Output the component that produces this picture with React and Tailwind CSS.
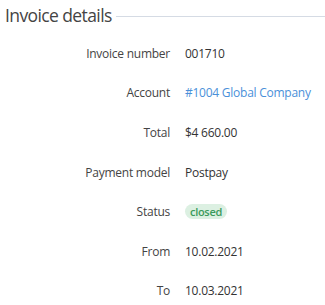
export default function App() {
  const rows = [
    ["Invoice number", <span>001710</span>],
    ["Account", <span className="text-[#4a90d9]">#1004 Global Company</span>],
    ["Total", <span>$4 660.00</span>],
    ["Payment model", <span>Postpay</span>],
    [
      "Status",
      <span className="inline-flex items-center h-[15px] px-[5px] rounded-full bg-[#dcf0e2] text-[#3b9a5c] text-[11px] font-semibold leading-none tracking-[-0.3px]">
        closed
      </span>,
    ],
    ["From", <span>10.02.2021</span>],
    ["To", <span>10.03.2021</span>],
  ];
  return (
    <div
      className="w-[325px] h-[305px] bg-white text-[#333] overflow-hidden"
      style={{ fontFamily: '"Open Sans", sans-serif' }}
    >
      <div className="flex items-center gap-[4px] pl-[5px] pt-[1px]">
        <span className="text-[17.5px] leading-[28px] text-[#444] tracking-[-0.6px]">Invoice details</span>
        <div className="flex-1 h-px bg-[#d5dbe4] mt-[2px]"></div>
      </div>
      <div className="flex flex-col pt-[5px]">
        {rows.map(([label, value]) => (
          <div key={label} className="flex items-center h-[39.6px] text-[12px] tracking-[-0.25px]">
            <div className="w-[170px] text-right text-[#444]">{label}</div>
            <div className="pl-[15px]">{value}</div>
          </div>
        ))}
      </div>
    </div>
  );
}
